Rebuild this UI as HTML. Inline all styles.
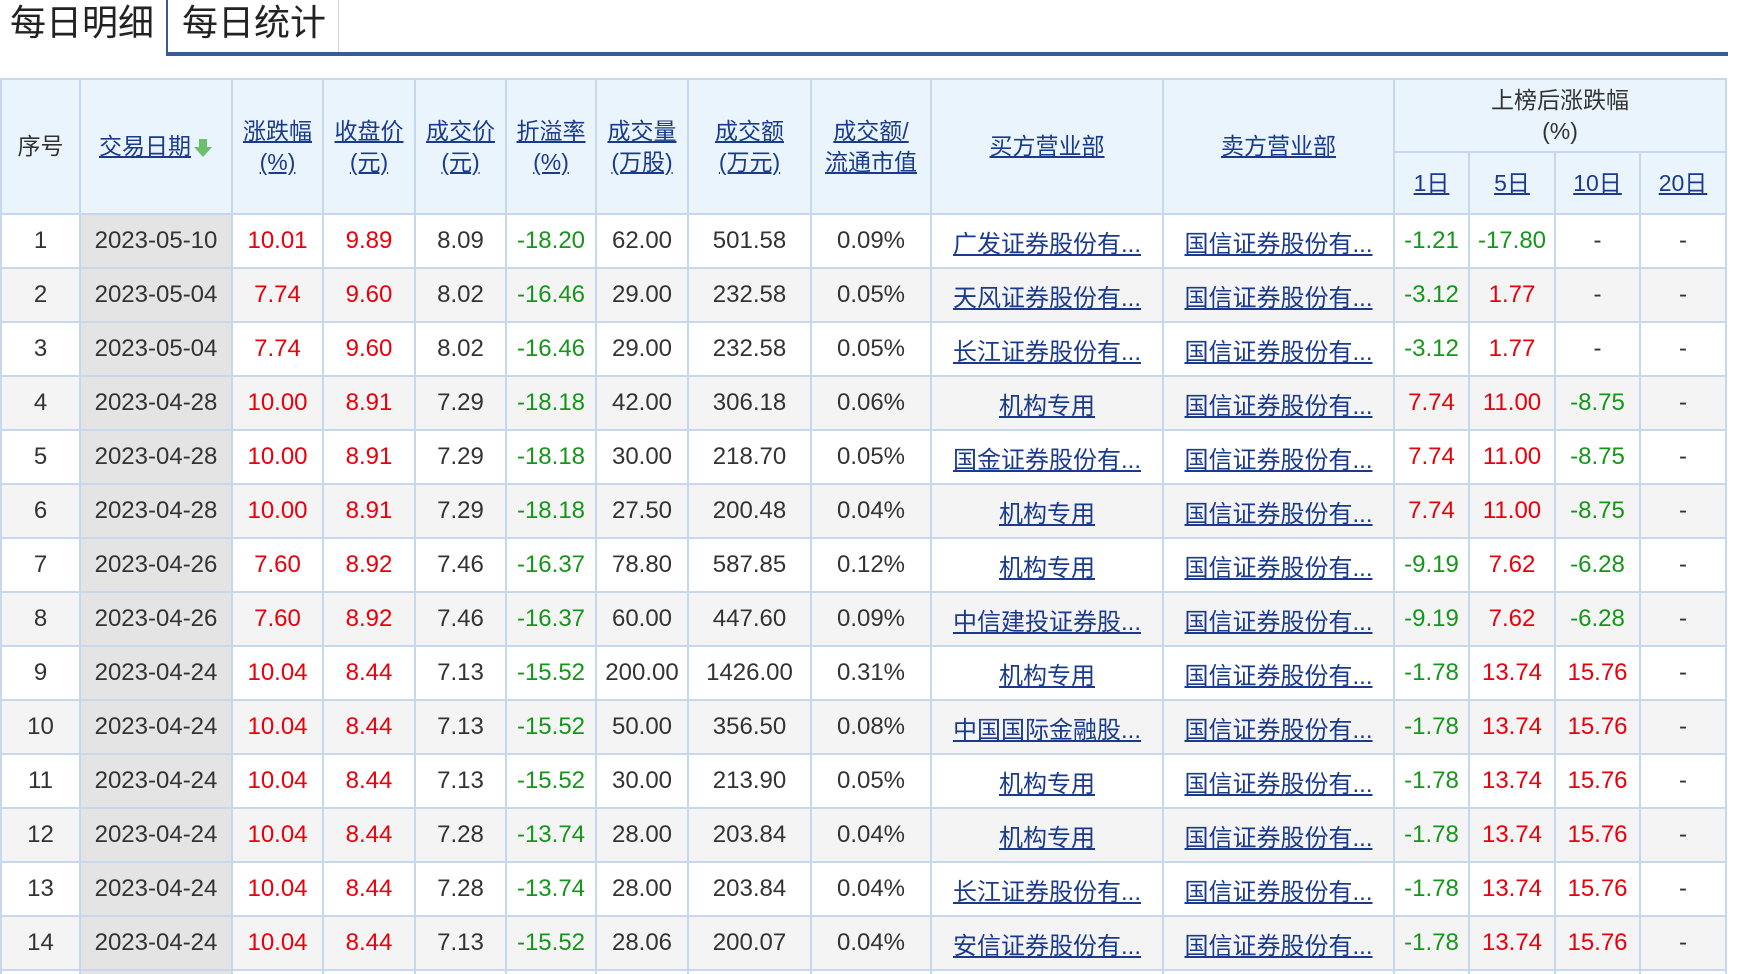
<!DOCTYPE html>
<html><head><meta charset="utf-8">
<style>
html,body{margin:0;padding:0;background:#fff;width:1738px;height:974px;overflow:hidden;font-family:"Liberation Sans","Noto Sans CJK SC",sans-serif;color:#333;}
.wrap{position:relative;width:1738px;height:974px;overflow:hidden;}
.tabs{position:absolute;left:0;top:0;width:1728px;height:56px;}
.tab1{position:absolute;left:10px;top:0;font-size:36px;line-height:46px;color:#222;}
.tab2{position:absolute;left:166px;top:0;width:173px;height:52px;border-left:2px solid #3a5a95;border-right:1px solid #c8d8ea;font-size:36px;line-height:46px;color:#222;padding-left:14px;box-sizing:border-box;}
.line{position:absolute;left:166px;top:52px;width:1562px;height:4px;background:#3a5a95;}
table{position:absolute;left:0;top:78px;border-collapse:collapse;table-layout:fixed;width:1725px;font-size:24px;}
td,th{border:2px solid #c6d9ec;text-align:center;padding:0;white-space:nowrap;overflow:hidden;}
th{background:#e9f4fd;font-weight:normal;color:#333;line-height:31px;font-size:23px;}
a{color:#1a3a8e;text-decoration:underline;}
tbody tr{height:54px;}
tbody tr:nth-child(even) td{background:#f4f4f4;}
tbody td.d{background:#e4e4e4 !important;}
.r{color:#e8000b;}.g{color:#15961a;}
.arr{display:inline-block;vertical-align:middle;margin-left:2px;}
</style></head><body><div class="wrap">
<div class="tabs">
<div class="tab1">每日明细</div>
<div class="tab2">每日统计</div>
<div class="line"></div>
</div>
<table>
<colgroup><col style="width:79px"><col style="width:152px"><col style="width:91px"><col style="width:92px"><col style="width:91px"><col style="width:90px"><col style="width:92px"><col style="width:123px"><col style="width:120px"><col style="width:232px"><col style="width:231px"><col style="width:75px"><col style="width:86px"><col style="width:85px"><col style="width:86px"></colgroup>
<thead>
<tr style="height:73px">
<th rowspan="2">序号</th>
<th rowspan="2"><a>交易日期</a><svg class="arr" width="20" height="20" viewBox="0 0 20 20"><path d="M6 1h8v8h5l-9 10L1 9h5z" fill="#6cc06c"/></svg></th>
<th rowspan="2"><a>涨跌幅<br>(%)</a></th>
<th rowspan="2"><a>收盘价<br>(元)</a></th>
<th rowspan="2"><a>成交价<br>(元)</a></th>
<th rowspan="2"><a>折溢率<br>(%)</a></th>
<th rowspan="2"><a>成交量<br>(万股)</a></th>
<th rowspan="2"><a>成交额<br>(万元)</a></th>
<th rowspan="2"><a>成交额/<br>流通市值</a></th>
<th rowspan="2"><a>买方营业部</a></th>
<th rowspan="2"><a>卖方营业部</a></th>
<th colspan="4">上榜后涨跌幅<br>(%)</th>
</tr>
<tr style="height:62px"><th><a>1日</a></th><th><a>5日</a></th><th><a>10日</a></th><th><a>20日</a></th></tr>
</thead>
<tbody>
<tr><td>1</td><td class="d">2023-05-10</td><td class="r">10.01</td><td class="r">9.89</td><td>8.09</td><td class="g">-18.20</td><td>62.00</td><td>501.58</td><td>0.09%</td><td><a>广发证券股份有...</a></td><td><a>国信证券股份有...</a></td><td class="g">-1.21</td><td class="g">-17.80</td><td>-</td><td>-</td></tr>
<tr><td>2</td><td class="d">2023-05-04</td><td class="r">7.74</td><td class="r">9.60</td><td>8.02</td><td class="g">-16.46</td><td>29.00</td><td>232.58</td><td>0.05%</td><td><a>天风证券股份有...</a></td><td><a>国信证券股份有...</a></td><td class="g">-3.12</td><td class="r">1.77</td><td>-</td><td>-</td></tr>
<tr><td>3</td><td class="d">2023-05-04</td><td class="r">7.74</td><td class="r">9.60</td><td>8.02</td><td class="g">-16.46</td><td>29.00</td><td>232.58</td><td>0.05%</td><td><a>长江证券股份有...</a></td><td><a>国信证券股份有...</a></td><td class="g">-3.12</td><td class="r">1.77</td><td>-</td><td>-</td></tr>
<tr><td>4</td><td class="d">2023-04-28</td><td class="r">10.00</td><td class="r">8.91</td><td>7.29</td><td class="g">-18.18</td><td>42.00</td><td>306.18</td><td>0.06%</td><td><a>机构专用</a></td><td><a>国信证券股份有...</a></td><td class="r">7.74</td><td class="r">11.00</td><td class="g">-8.75</td><td>-</td></tr>
<tr><td>5</td><td class="d">2023-04-28</td><td class="r">10.00</td><td class="r">8.91</td><td>7.29</td><td class="g">-18.18</td><td>30.00</td><td>218.70</td><td>0.05%</td><td><a>国金证券股份有...</a></td><td><a>国信证券股份有...</a></td><td class="r">7.74</td><td class="r">11.00</td><td class="g">-8.75</td><td>-</td></tr>
<tr><td>6</td><td class="d">2023-04-28</td><td class="r">10.00</td><td class="r">8.91</td><td>7.29</td><td class="g">-18.18</td><td>27.50</td><td>200.48</td><td>0.04%</td><td><a>机构专用</a></td><td><a>国信证券股份有...</a></td><td class="r">7.74</td><td class="r">11.00</td><td class="g">-8.75</td><td>-</td></tr>
<tr><td>7</td><td class="d">2023-04-26</td><td class="r">7.60</td><td class="r">8.92</td><td>7.46</td><td class="g">-16.37</td><td>78.80</td><td>587.85</td><td>0.12%</td><td><a>机构专用</a></td><td><a>国信证券股份有...</a></td><td class="g">-9.19</td><td class="r">7.62</td><td class="g">-6.28</td><td>-</td></tr>
<tr><td>8</td><td class="d">2023-04-26</td><td class="r">7.60</td><td class="r">8.92</td><td>7.46</td><td class="g">-16.37</td><td>60.00</td><td>447.60</td><td>0.09%</td><td><a>中信建投证券股...</a></td><td><a>国信证券股份有...</a></td><td class="g">-9.19</td><td class="r">7.62</td><td class="g">-6.28</td><td>-</td></tr>
<tr><td>9</td><td class="d">2023-04-24</td><td class="r">10.04</td><td class="r">8.44</td><td>7.13</td><td class="g">-15.52</td><td>200.00</td><td>1426.00</td><td>0.31%</td><td><a>机构专用</a></td><td><a>国信证券股份有...</a></td><td class="g">-1.78</td><td class="r">13.74</td><td class="r">15.76</td><td>-</td></tr>
<tr><td>10</td><td class="d">2023-04-24</td><td class="r">10.04</td><td class="r">8.44</td><td>7.13</td><td class="g">-15.52</td><td>50.00</td><td>356.50</td><td>0.08%</td><td><a>中国国际金融股...</a></td><td><a>国信证券股份有...</a></td><td class="g">-1.78</td><td class="r">13.74</td><td class="r">15.76</td><td>-</td></tr>
<tr><td>11</td><td class="d">2023-04-24</td><td class="r">10.04</td><td class="r">8.44</td><td>7.13</td><td class="g">-15.52</td><td>30.00</td><td>213.90</td><td>0.05%</td><td><a>机构专用</a></td><td><a>国信证券股份有...</a></td><td class="g">-1.78</td><td class="r">13.74</td><td class="r">15.76</td><td>-</td></tr>
<tr><td>12</td><td class="d">2023-04-24</td><td class="r">10.04</td><td class="r">8.44</td><td>7.28</td><td class="g">-13.74</td><td>28.00</td><td>203.84</td><td>0.04%</td><td><a>机构专用</a></td><td><a>国信证券股份有...</a></td><td class="g">-1.78</td><td class="r">13.74</td><td class="r">15.76</td><td>-</td></tr>
<tr><td>13</td><td class="d">2023-04-24</td><td class="r">10.04</td><td class="r">8.44</td><td>7.28</td><td class="g">-13.74</td><td>28.00</td><td>203.84</td><td>0.04%</td><td><a>长江证券股份有...</a></td><td><a>国信证券股份有...</a></td><td class="g">-1.78</td><td class="r">13.74</td><td class="r">15.76</td><td>-</td></tr>
<tr><td>14</td><td class="d">2023-04-24</td><td class="r">10.04</td><td class="r">8.44</td><td>7.13</td><td class="g">-15.52</td><td>28.06</td><td>200.07</td><td>0.04%</td><td><a>安信证券股份有...</a></td><td><a>国信证券股份有...</a></td><td class="g">-1.78</td><td class="r">13.74</td><td class="r">15.76</td><td>-</td></tr>
<tr><td></td><td class="d"></td><td></td><td></td><td></td><td></td><td></td><td></td><td></td><td></td><td></td><td></td><td></td><td></td><td></td></tr>
</tbody>
</table>
</div></body></html>
